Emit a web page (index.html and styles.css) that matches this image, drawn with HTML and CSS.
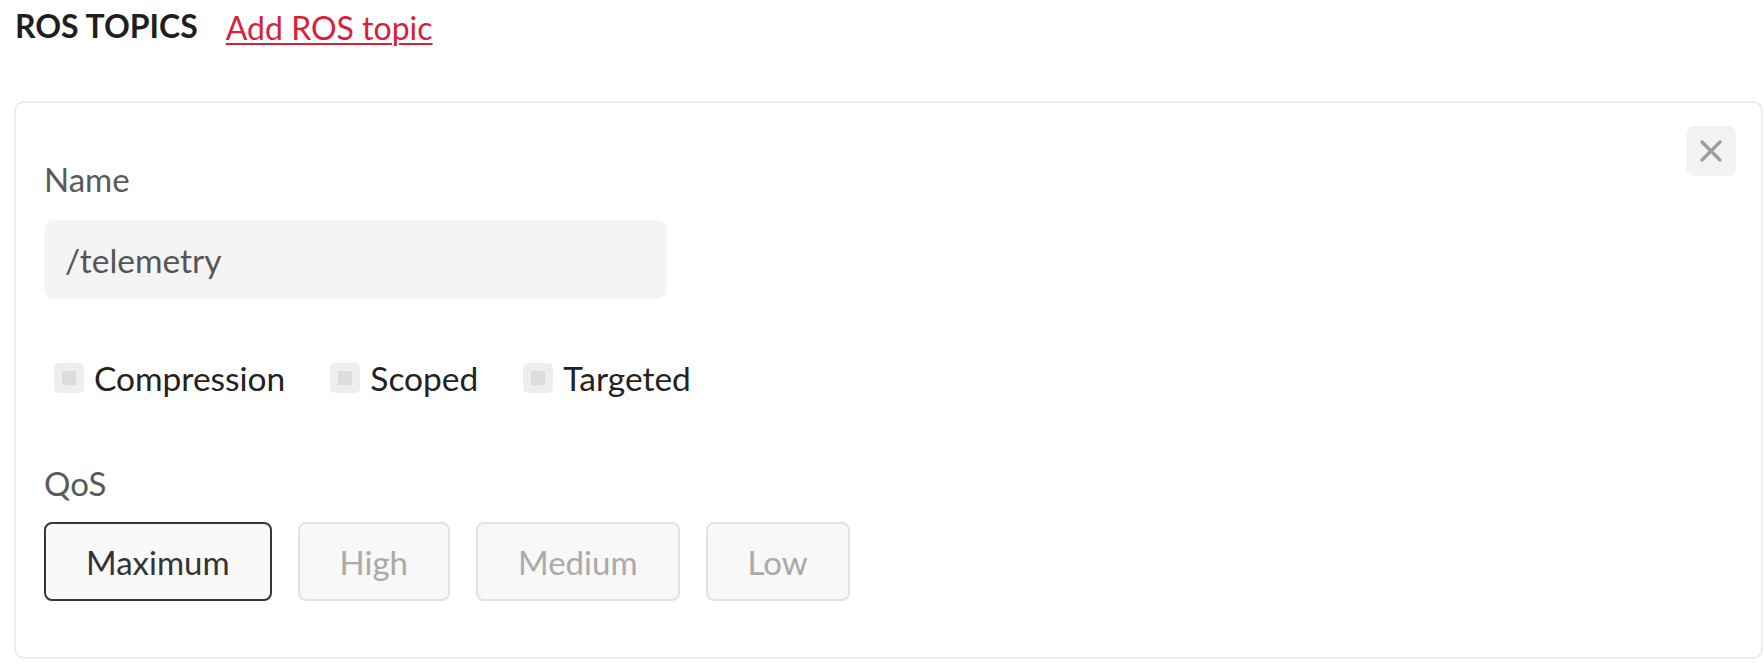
FILE: index.html
```html
<!DOCTYPE html>
<html lang="en">
<head>
<meta charset="utf-8">
<title>ROS Topics</title>
<link rel="stylesheet" href="styles.css">
</head>
<body>
  <div class="header">
    <h2 class="title">ROS TOPICS</h2>
    <a class="add-link" href="#">Add ROS topic</a>
  </div>

  <div class="card">
    <button class="close-btn" type="button" aria-label="Remove">
      <svg width="22" height="22" viewBox="0 0 22 22">
        <path d="M2 2 L20 20 M20 2 L2 20" stroke="#9d9d9d" stroke-width="3.2" stroke-linecap="round" fill="none"/>
      </svg>
    </button>

    <label class="field-label">Name</label>
    <input class="text-input" type="text" value="/telemetry">

    <div class="checks">
      <label class="check"><span class="box"><span class="box-inner"></span></span><span class="check-text">Compression</span></label>
      <label class="check"><span class="box"><span class="box-inner"></span></span><span class="check-text">Scoped</span></label>
      <label class="check"><span class="box"><span class="box-inner"></span></span><span class="check-text">Targeted</span></label>
    </div>

    <div class="field-label qos-label">QoS</div>
    <div class="qos">
      <button class="qos-btn active" type="button">Maximum</button>
      <button class="qos-btn" type="button">High</button>
      <button class="qos-btn" type="button">Medium</button>
      <button class="qos-btn" type="button">Low</button>
    </div>
  </div>
</body>
</html>
```

FILE: styles.css
```css
* { box-sizing: border-box; }

body {
  margin: 0;
  background: #ffffff;
  font-family: Lato, "Noto Sans", sans-serif;
  color: #222222;
}

.header {
  display: flex;
  align-items: flex-start;
  gap: 28px;
  padding: 6px 0 0 15px;
}

.title {
  margin: 0;
  font-size: 32px;
  line-height: 40px;
  font-weight: 700;
  color: #1f1f1f;
}

.add-link {
  font-size: 32px;
  line-height: 44px;
  color: #d9203a;
  text-decoration: underline;
  text-decoration-thickness: 2px;
  text-underline-offset: 3px;
}

.card {
  position: relative;
  margin: 51px 1px 0 14px;
  border: 2px solid #ececec;
  border-radius: 10px;
  padding: 56px 28px 56px 28px;
}

.close-btn {
  position: absolute;
  top: 23px;
  right: 25px;
  width: 50px;
  height: 50px;
  border: none;
  border-radius: 8px;
  background: #f3f3f3;
  display: flex;
  align-items: center;
  justify-content: center;
  padding: 0;
}

.field-label {
  display: block;
  font-size: 33px;
  line-height: 40px;
  color: #5a5a5a;
  margin-bottom: 21px;
}

.text-input {
  display: block;
  width: 623px;
  height: 79px;
  border: none;
  border-radius: 10px;
  background: #f4f4f4;
  padding: 0 21px;
  font-family: Lato, "Noto Sans", sans-serif;
  font-size: 33.5px;
  color: #555555;
  outline: none;
}

.checks {
  display: flex;
  align-items: center;
  gap: 45px;
  margin-top: 59px;
  padding-left: 10px;
}

.check {
  display: flex;
  align-items: center;
  gap: 10px;
}

.box {
  width: 30px;
  height: 30px;
  border-radius: 5px;
  background: #eeeeee;
  display: flex;
  align-items: center;
  justify-content: center;
}

.box-inner {
  width: 14px;
  height: 14px;
  background: #dcdcdc;
  border-radius: 1px;
}

.check-text {
  font-size: 33.5px;
  line-height: 40px;
  color: #222222;
}

.qos-label {
  margin-top: 65px;
  margin-bottom: 19px;
}

.qos {
  display: flex;
  gap: 26px;
}

.qos-btn {
  height: 79px;
  padding: 0 40px;
  border: 2px solid #e2e2e2;
  border-radius: 8px;
  background: #f8f8f8;
  font-family: Lato, "Noto Sans", sans-serif;
  font-size: 33px;
  line-height: 40px;
  color: #aaaaaa;
}

.qos-btn.active {
  border-color: #363636;
  background: #f9f9f9;
  color: #333333;
}
```
